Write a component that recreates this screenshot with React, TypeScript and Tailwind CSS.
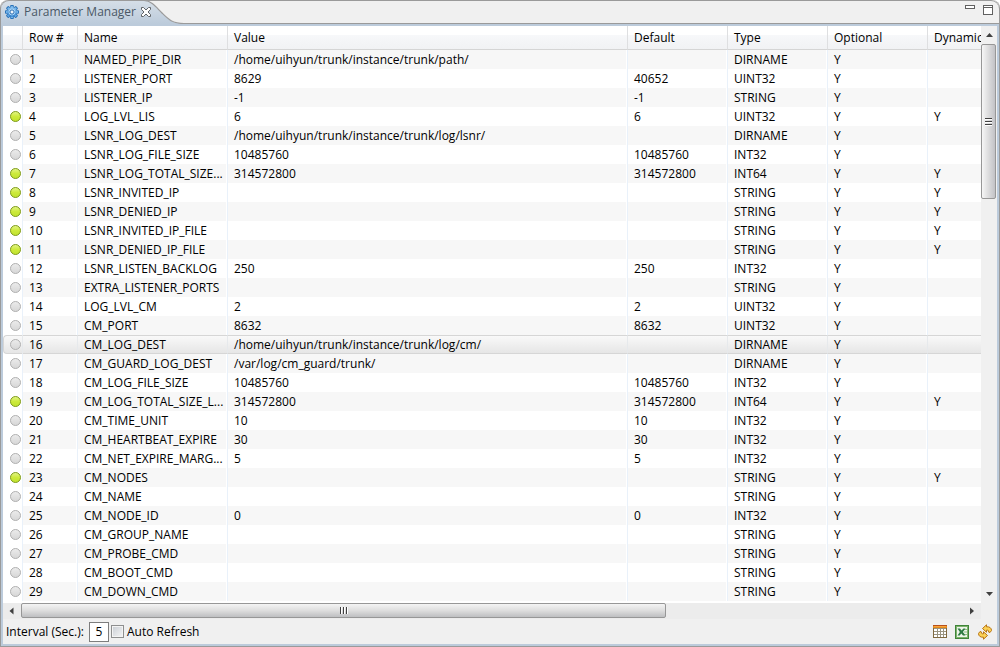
import { useState } from "react";

type Row = [name: string, value: string, def: string, type: string, dynamic: boolean];

const rows: Row[] = [
  ["NAMED_PIPE_DIR", "/home/uihyun/trunk/instance/trunk/path/", "", "DIRNAME", false],
  ["LISTENER_PORT", "8629", "40652", "UINT32", false],
  ["LISTENER_IP", "-1", "-1", "STRING", false],
  ["LOG_LVL_LIS", "6", "6", "UINT32", true],
  ["LSNR_LOG_DEST", "/home/uihyun/trunk/instance/trunk/log/lsnr/", "", "DIRNAME", false],
  ["LSNR_LOG_FILE_SIZE", "10485760", "10485760", "INT32", false],
  ["LSNR_LOG_TOTAL_SIZE...", "314572800", "314572800", "INT64", true],
  ["LSNR_INVITED_IP", "", "", "STRING", true],
  ["LSNR_DENIED_IP", "", "", "STRING", true],
  ["LSNR_INVITED_IP_FILE", "", "", "STRING", true],
  ["LSNR_DENIED_IP_FILE", "", "", "STRING", true],
  ["LSNR_LISTEN_BACKLOG", "250", "250", "INT32", false],
  ["EXTRA_LISTENER_PORTS", "", "", "STRING", false],
  ["LOG_LVL_CM", "2", "2", "UINT32", false],
  ["CM_PORT", "8632", "8632", "UINT32", false],
  ["CM_LOG_DEST", "/home/uihyun/trunk/instance/trunk/log/cm/", "", "DIRNAME", false],
  ["CM_GUARD_LOG_DEST", "/var/log/cm_guard/trunk/", "", "DIRNAME", false],
  ["CM_LOG_FILE_SIZE", "10485760", "10485760", "INT32", false],
  ["CM_LOG_TOTAL_SIZE_L...", "314572800", "314572800", "INT64", true],
  ["CM_TIME_UNIT", "10", "10", "INT32", false],
  ["CM_HEARTBEAT_EXPIRE", "30", "30", "INT32", false],
  ["CM_NET_EXPIRE_MARG...", "5", "5", "INT32", false],
  ["CM_NODES", "", "", "STRING", true],
  ["CM_NAME", "", "", "STRING", false],
  ["CM_NODE_ID", "0", "0", "INT32", false],
  ["CM_GROUP_NAME", "", "", "STRING", false],
  ["CM_PROBE_CMD", "", "", "STRING", false],
  ["CM_BOOT_CMD", "", "", "STRING", false],
  ["CM_DOWN_CMD", "", "", "STRING", false],
];

const headers = ["", "Row #", "Name", "Value", "Default", "Type", "Optional", "Dynamic"];

function GearIcon() {
  return (
    <svg width="16" height="16" viewBox="0 0 16 16" aria-hidden="true">
      <defs>
        <linearGradient id="gear" x1="0" y1="0" x2="0" y2="1">
          <stop offset="0" stopColor="#8cc4f0" />
          <stop offset="1" stopColor="#2f7fcb" />
        </linearGradient>
      </defs>
      <g fill="#2a72b8">
        {[0, 45, 90, 135].map((a) => (
          <rect key={a} x="6.2" y="1" width="3.6" height="14" rx="0.8" transform={`rotate(${a} 8 8)`} />
        ))}
      </g>
      <g fill="#6fb2ea">
        {[0, 45, 90, 135].map((a) => (
          <rect key={a} x="7" y="2" width="2" height="12" transform={`rotate(${a} 8 8)`} />
        ))}
      </g>
      <circle cx="8" cy="8" r="4.800" fill="url(#gear)" />
      <circle cx="8" cy="8" r="3" fill="none" stroke="#a9d5f7" strokeWidth="1" />
      <circle cx="8" cy="8" r="2" fill="#eef4fa" stroke="#2768ac" strokeWidth="0.8" />
    </svg>
  );
}

function CloseIcon() {
  return (
    <svg width="12" height="12" viewBox="0 0 12 12" aria-hidden="true">
      <path
        d="M1.5 1.5H3.5L6 4L8.5 1.5H10.5V3.5L8 6L10.5 8.5V10.5H8.5L6 8L3.5 10.5H1.5V8.5L4 6L1.5 3.5Z"
        fill="#fff"
        stroke="#606468"
      />
    </svg>
  );
}

function TabCurve() {
  return (
    <svg width="44" height="24" viewBox="0 0 44 24" className="shrink-0" aria-hidden="true">
      <defs>
        <linearGradient id="tab" x1="0" y1="0" x2="0" y2="1">
          <stop offset="0" stopColor="#d6dfe8" />
          <stop offset="1" stopColor="#bccbdb" />
        </linearGradient>
      </defs>
      <path d="M0 0.500H4C12 1 16 7 22 13C28 19 32 23.500 43 23.500L44 24H0Z" fill="url(#tab)" />
      <path d="M0 0.500H4C12 1 16 7 22 13C28 19 32 23.500 44 23.500" fill="none" stroke="#9a9a9a" strokeWidth="1.200" />
    </svg>
  );
}

function Dot({ on }: { on: boolean }) {
  return (
    <svg width="11" height="12" viewBox="0 0 11 12" className="block" aria-hidden="true">
      <defs>
        <linearGradient id="dotOn" x1="0" y1="0" x2="0" y2="1">
          <stop offset="0" stopColor="#e4f58c" />
          <stop offset="0.5" stopColor="#cdea3c" />
          <stop offset="1" stopColor="#bfe22c" />
        </linearGradient>
        <linearGradient id="dotOff" x1="0" y1="0" x2="0" y2="1">
          <stop offset="0" stopColor="#ececec" />
          <stop offset="1" stopColor="#d6d6d6" />
        </linearGradient>
      </defs>
      <circle cx="5.500" cy="5.500" r="5" fill={on ? "url(#dotOn)" : "url(#dotOff)"} stroke={on ? "#7f9a1e" : "#b0b0b0"} />
    </svg>
  );
}

function Arrow({ d }: { d: string }) {
  return (
    <svg width="9" height="9" viewBox="0 0 9 9" aria-hidden="true">
      <path d={d} fill="#404040" />
    </svg>
  );
}

function GridIcon() {
  return (
    <svg width="14" height="13" viewBox="0 0 14 13" aria-hidden="true">
      <rect x="0.5" y="0.5" width="13" height="12" fill="#fff" stroke="#806a40" />
      <rect x="0" y="0" width="14" height="3" fill="#e58a1c" />
      <rect x="0" y="0" width="14" height="1" fill="#b8501a" />
      <rect x="1" y="1" width="12" height="1" fill="#f7a43c" />
      <path d="M1 3.500H13M1 6.500H13M1 9.500H13M4.500 3V12M7.500 3V12M10.500 3V12" stroke="#9a9480" />
    </svg>
  );
}

function ExcelIcon() {
  return (
    <svg width="14" height="14" viewBox="0 0 14 14" aria-hidden="true">
      <rect x="0.500" y="0.500" width="13" height="13" fill="#7db36c" stroke="#3f8438" />
      <rect x="2" y="2" width="10" height="10" fill="#eef5ea" />
      <path d="M9 4.500H12M9 7H12M9 9.500H12" stroke="#8fbd84" />
      <path d="M2.500 3.500H5L6.500 5.400L8.500 3.500H10.500L7.900 7L10.500 10.500H8L6.300 8.600L4.700 10.500H2.500L4.900 7Z" fill="#2e7a42" />
    </svg>
  );
}

function RefreshIcon() {
  return (
    <svg width="16" height="16" viewBox="0 0 16 16" aria-hidden="true">
      <g fill="#fbd257" stroke="#b87414" strokeWidth="1" strokeLinejoin="round">
        <path d="M5.500 4.500L9.500 0.800V2.800C12.500 2.500 14.500 4 14.500 6.500L13 8.500L11.500 8C12 6.500 11 6 9.500 6.200V8.200Z" />
        <path d="M10.500 11.500L6.500 15.200V13.200C3.500 13.500 1.500 12 1.500 9.500L3 7.500L4.500 8C4 9.500 5 10 6.500 9.800V7.800Z" />
      </g>
    </svg>
  );
}

export default function App() {
  const [interval, setIntervalValue] = useState("5");
  const [auto, setAuto] = useState(false);
  const [selected, setSelected] = useState(15);

  return (
    <div className="min-h-screen bg-white font-['Open_Sans','Noto_Sans',sans-serif] text-[12px] text-black">
      <div className="flex min-h-screen flex-col overflow-hidden rounded-t-lg border border-t-0 border-[#9a9a9a] bg-[#f0f0f0]">
        <header className="flex h-6 shrink-0 items-stretch rounded-t-lg bg-[linear-gradient(#9a9a9a,#9a9a9a)] bg-[length:100%_1px] bg-bottom bg-no-repeat shadow-[inset_0_1px_0_#9a9a9a]">
          <div className="flex items-center rounded-tl-lg bg-linear-to-b from-[#d6dfe8] to-[#bccbdb] pl-[3px] shadow-[inset_0_1px_0_#9a9a9a]">
            <GearIcon />
            <h1 className="px-1 leading-5 whitespace-nowrap text-[#4a5866]">Parameter Manager</h1>
          </div>
          <div className="grid">
            <div className="col-start-1 row-start-1">
              <TabCurve />
            </div>
            <button type="button" aria-label="Close" className="z-10 col-start-1 row-start-1 self-center justify-self-start">
              <CloseIcon />
            </button>
          </div>
          <div className="ml-auto flex items-start gap-2 pt-[5px] pr-[6px]">
            <button type="button" aria-label="Minimize" className="h-1 w-[10px] border border-[#606060] bg-white" />
            <button type="button" aria-label="Maximize" className="h-[10px] w-[10px] border border-t-[3px] border-[#606060] border-double bg-white" />
          </div>
        </header>

        <main className="flex grow flex-col border-2 border-[#bccbdb]">
          <div className="flex">
            <div className="min-w-0 grow overflow-hidden bg-white pb-[2px]">
              <table className="w-full min-w-[960px] table-fixed border-separate border-spacing-0">
                <colgroup>
                  <col className="w-[20px]" />
                  <col className="w-[55px]" />
                  <col className="w-[150px]" />
                  <col className="w-[400px]" />
                  <col className="w-[100px]" />
                  <col className="w-[100px]" />
                  <col className="w-[100px]" />
                  <col />
                </colgroup>
                <thead>
                  <tr className="h-6">
                    {headers.map((h, i) => (
                      <th
                        key={i}
                        scope="col"
                        aria-label={h || "Status"}
                        className="overflow-hidden border-r border-b border-r-[#dedfe1] border-b-[#d5d5d5] bg-[linear-gradient(#fff_0,#fff_40%,#f7f8fa_40%,#f1f2f4_100%)] p-0 pl-[6px] text-left leading-[22px] font-normal whitespace-nowrap last:border-r-0"
                      >
                        {h}
                      </th>
                    ))}
                  </tr>
                </thead>
                <tbody>
                  {rows.map(([name, value, def, type, dynamic], i) => {
                    const sel = i === selected;
                    const cell = sel
                      ? "border-y border-r border-y-[#d6d6d6] border-r-[#e6e9ec] bg-linear-to-b from-[#f9f9f9] to-[#e6e6e6] p-0 pl-[6px] leading-[17px] last:border-r-0"
                      : i % 2 === 0
                        ? "border-r border-[#e9f1fa] bg-[#f7f7f7] p-0 pl-[6px] leading-[19px] shadow-[inset_-1px_0_0_#fff] last:border-r-0 last:shadow-none"
                        : "border-r border-[#e9f1fa] bg-white p-0 pl-[6px] leading-[19px] last:border-r-0";
                    return (
                      <tr key={name} className="h-[19px] whitespace-nowrap" onClick={() => setSelected(i)}>
                        <td
                          className={
                            sel
                              ? "rounded-l-sm border border-[#d6d6d6] border-r-[#e6e9ec] bg-linear-to-b from-[#f9f9f9] to-[#e6e6e6] p-0 pl-[6px]"
                              : "border-r border-[#e9f1fa] bg-white p-0 pl-[7px]"
                          }
                        >
                          <Dot on={dynamic} />
                        </td>
                        <td className={cell}>{i + 1}</td>
                        <td className={cell}>{name}</td>
                        <td className={cell}>{value}</td>
                        <td className={cell}>{def}</td>
                        <td className={cell}>{type}</td>
                        <td className={cell}>Y</td>
                        <td className={cell}>{dynamic ? "Y" : ""}</td>
                      </tr>
                    );
                  })}
                </tbody>
              </table>
            </div>

            <div className="flex w-4 shrink-0 flex-col bg-[#f0f0f0]">
              <button type="button" aria-label="Scroll up" className="flex h-[18px] items-center justify-center">
                <Arrow d="M4.500 2L8 6H1Z" />
              </button>
              <div className="flex h-[155px] w-[15px] flex-col items-center justify-center gap-px rounded-xs border border-[#979797] bg-linear-to-r from-[#f6f6f6] via-[#dcdcdd] to-[#c2c2c6]">
                <span className="h-0.5 w-[7px] border-t border-[#404040] bg-white" />
                <span className="h-0.5 w-[7px] border-t border-[#404040] bg-white" />
                <span className="h-0.5 w-[7px] border-t border-[#404040] bg-white" />
              </div>
              <button type="button" aria-label="Scroll down" className="mt-auto flex h-[18px] items-center justify-center">
                <Arrow d="M1 2H8L4.500 6Z" />
              </button>
            </div>
          </div>

          <div className="mr-4 flex h-4 shrink-0 bg-[#ececec]">
            <button type="button" aria-label="Scroll left" className="flex w-[18px] items-center justify-center">
              <Arrow d="M1.500 4L5.500 0.500V7.500Z" />
            </button>
            <div className="flex grow">
              <div className="flex h-[15px] w-[68.5%] items-center justify-center gap-px rounded-xs border border-[#979797] bg-linear-to-b from-[#f4f4f4] via-[#dedede] to-[#bebfc1]">
                <span className="h-[7px] w-0.5 border-l border-[#404040] bg-white" />
                <span className="h-[7px] w-0.5 border-l border-[#404040] bg-white" />
                <span className="h-[7px] w-0.5 border-l border-[#404040] bg-white" />
              </div>
            </div>
            <button type="button" aria-label="Scroll right" className="flex w-[18px] items-center justify-center">
              <Arrow d="M6 4L2 0.500V7.500Z" />
            </button>
          </div>

          <footer className="flex grow items-center pr-1 pl-[3px]">
            <label htmlFor="interval" className="w-[83px] whitespace-nowrap">
              Interval (Sec.):
            </label>
            <input
              id="interval"
              value={interval}
              onChange={(e) => setIntervalValue(e.target.value)}
              className="h-5 w-5 border border-[#7d7d7d] bg-white text-center outline-none"
            />
            <input
              id="auto"
              type="checkbox"
              checked={auto}
              onChange={(e) => setAuto(e.target.checked)}
              className="ml-[2px] size-[13px] appearance-none border border-[#8e8f8f] bg-linear-to-br from-[#c9ced4] to-[#f6f6f6] shadow-[inset_0_0_0_1px_#f4f4f4] checked:bg-[#4a6fa0]"
            />
            <label htmlFor="auto" className="pl-[3px]">
              Auto Refresh
            </label>
            <div className="ml-auto flex items-center gap-2">
              <button type="button" aria-label="Choose columns">
                <GridIcon />
              </button>
              <button type="button" aria-label="Export to Excel">
                <ExcelIcon />
              </button>
              <button type="button" aria-label="Refresh">
                <RefreshIcon />
              </button>
            </div>
          </footer>
        </main>
      </div>
    </div>
  );
}
